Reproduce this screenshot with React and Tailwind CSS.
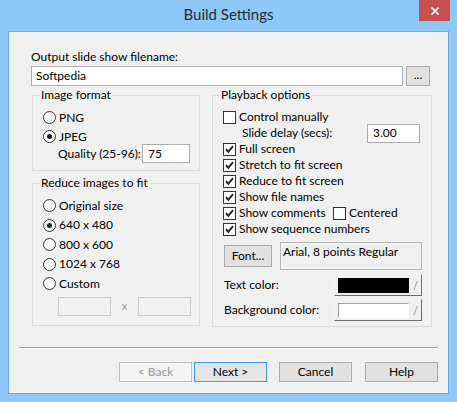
import React from "react";

const Radio = ({ checked, children }) => (
  <div className="flex items-center h-[19.5px] pl-[10px]">
    <span className="w-[13px] h-[13px] rounded-full border border-[#333333] bg-white flex items-center justify-center">
      {checked && <span className="w-[5px] h-[5px] rounded-full bg-[#1c1c1c]" />}
    </span>
    <span className="ml-[3px]">{children}</span>
  </div>
);

const Tick = () => (
  <svg viewBox="0 0 11 11" className="w-[11px] h-[11px]">
    <path d="M2 5.2 L4.3 7.8 L9 2.2" stroke="#1e1e1e" strokeWidth="1.9" fill="none" />
  </svg>
);

const Check = ({ checked, children, className = "" }) => (
  <div className={"flex items-center h-4 " + className}>
    <span className="w-[13px] h-[13px] border border-[#333333] bg-white flex items-center justify-center shrink-0">
      {checked && <Tick />}
    </span>
    <span className="ml-[3px] whitespace-nowrap">{children}</span>
  </div>
);

const Group = ({ title, className = "", children }) => (
  <div className={"relative border border-[#dcdcdc] " + className}>
    <span className="absolute -top-[9px] left-[6px] px-[2px] bg-[#f0f0f0] leading-4">{title}</span>
    {children}
  </div>
);

const Swatch = ({ color }) => (
  <div className="ml-auto mr-[9px] w-[88px] h-[22px] border border-t-[#f4f4f4] border-l-[#f4f4f4] border-b-[#6b6b6b] border-r-[#6b6b6b] bg-[#f0f0f0] flex items-center pl-[3px]">
    <span className={"w-[71px] h-[15px] " + color} />
    <span className="ml-[4px] text-[#8a8a8a] text-[11px] leading-none">/</span>
  </div>
);

const Button = ({ children, className = "" }) => (
  <div className={"w-[73px] h-[20px] border flex items-center justify-center " + className}>{children}</div>
);

export default function App() {
  return (
    <div className="w-[457px] h-[402px] bg-[#8ec8f8] flex flex-col overflow-hidden font-['Lato',sans-serif] text-[12px] leading-4 text-black">
      <div className="h-[31px] relative flex items-center justify-center pb-[3px] shrink-0">
        <span className="text-[15px] text-[#2b2b2b]">Build Settings</span>
        <div className="absolute top-0 right-[7px] w-[31px] h-[21px] bg-[#c75050] flex items-center justify-center">
          <svg viewBox="0 0 8 8" className="w-[8px] h-[8px]">
            <path d="M0.5 0.5 L7.5 7.5 M7.5 0.5 L0.5 7.5" stroke="#ffffff" strokeWidth="1.6" />
          </svg>
        </div>
      </div>

      <div className="mx-[8px] h-[363px] bg-[#f0f0f0] border border-[#73a5d6] flex flex-col shrink-0">
        <div className="pt-[17px] pl-[22px]">Output slide show filename:</div>
        <div className="flex mt-[1px] pl-[22px]">
          <div className="w-[372px] h-[20px] border border-[#abadb3] bg-white flex items-center pl-[4px]">Softpedia</div>
          <div className="ml-[3px] w-[24px] h-[20px] border border-[#adadad] bg-[#e1e1e1] flex items-center justify-center pb-[3px]">...</div>
        </div>

        <div className="flex mt-[9px] pl-[23px] gap-[12px]">
          <div className="w-[168px] flex flex-col">
            <Group title="Image format" className="h-[76px] pt-[12px]">
              <div className="h-[19px] flex items-center pl-[10px]">
                <span className="w-[13px] h-[13px] rounded-full border border-[#333333] bg-white" />
                <span className="ml-[3px]">PNG</span>
              </div>
              <div className="h-[19px] flex items-center pl-[10px]">
                <span className="w-[13px] h-[13px] rounded-full border border-[#333333] bg-white flex items-center justify-center">
                  <span className="w-[5px] h-[5px] rounded-full bg-[#1c1c1c]" />
                </span>
                <span className="ml-[3px]">JPEG</span>
              </div>
              <div className="h-[19px] -mt-[2px] flex items-center pl-[25px]">
                <span className="w-[84px] whitespace-nowrap">Quality (25-96):</span>
                <div className="w-[48px] h-[19px] border border-[#abadb3] bg-white flex items-center pl-[5px]">75</div>
              </div>
            </Group>

            <Group title="Reduce images to fit" className="h-[143px] mt-[12px] pt-[12px]">
              <Radio>Original size</Radio>
              <Radio checked>640 x 480</Radio>
              <Radio>800 x 600</Radio>
              <Radio>1024 x 768</Radio>
              <Radio>Custom</Radio>
              <div className="flex items-center mt-[3px] pl-[25px]">
                <div className="w-[53px] h-[19px] border border-[#cfcfcf]" />
                <span className="w-[27px] text-center text-[#9a9a9a] text-[11px]">x</span>
                <div className="w-[53px] h-[19px] border border-[#cfcfcf]" />
              </div>
            </Group>
          </div>

          <Group title="Playback options" className="w-[220px] h-[232px] pt-[13px]">
            <Check className="pl-[10px]">Control manually</Check>
            <div className="flex items-center h-4 pl-[29px]">
              <span>Slide delay (secs):</span>
              <div className="ml-auto mr-[11px] w-[53px] h-[19px] shrink-0 border border-[#abadb3] bg-white flex items-center pl-[5px]">3.00</div>
            </div>
            <Check checked className="pl-[10px]">Full screen</Check>
            <Check checked className="pl-[10px]">Stretch to fit screen</Check>
            <Check checked className="pl-[10px]">Reduce to fit screen</Check>
            <Check checked className="pl-[10px]">Show file names</Check>
            <div className="flex items-center h-4 pl-[10px]">
              <Check checked className="w-[110px]">Show comments</Check>
              <Check>Centered</Check>
            </div>
            <Check checked className="pl-[10px]">Show sequence numbers</Check>

            <div className="flex items-center h-[28px] mt-[5px] pl-[11px]">
              <div className="w-[48px] h-[22px] border border-[#adadad] bg-[#e1e1e1] flex items-center justify-center">Font...</div>
              <div className="ml-[8px] w-[142px] h-[28px] border border-[#b9b9b9] pl-[2px] pt-[1px]">Arial, 8 points Regular</div>
            </div>
            <div className="flex items-center h-[22px] mt-[4px] pl-[11px]">
              <span>Text color:</span>
              <Swatch color="bg-black" />
            </div>
            <div className="flex items-center h-[22px] mt-[3px] pl-[11px]">
              <span>Background color:</span>
              <Swatch color="bg-white border border-t-[#a0a0a0] border-l-[#a0a0a0] border-b-white border-r-white" />
            </div>
          </Group>
        </div>

        <div className="mt-[20px] mx-[10px] border-t border-t-[#a0a0a0] border-b border-b-white" />

        <div className="flex justify-end pr-[10px] mt-[13px]">
          <Button className="border-[#bfbfbf] bg-[#f4f4f4] text-[#9a9a9a]">&lt; Back</Button>
          <Button className="ml-[2px] border-[#3c9af0] bg-[#e5e5e5]">Next &gt;</Button>
          <Button className="ml-[12px] border-[#adadad] bg-[#e1e1e1]">Cancel</Button>
          <Button className="ml-[13px] border-[#adadad] bg-[#e1e1e1]">Help</Button>
        </div>
      </div>
    </div>
  );
}
